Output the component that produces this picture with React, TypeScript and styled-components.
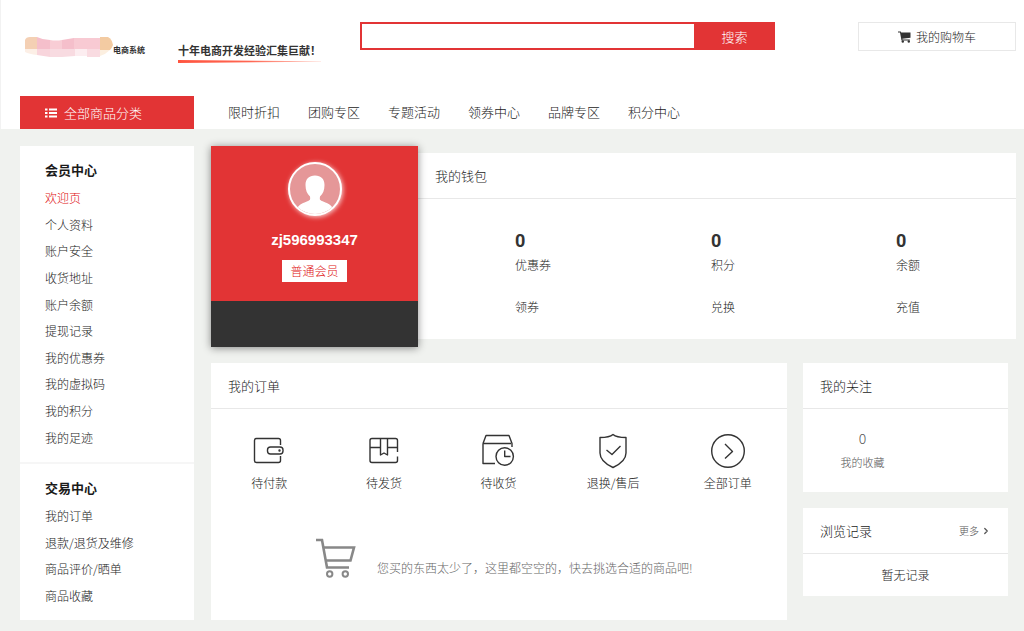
import React from 'react';
import styled, { createGlobalStyle } from 'styled-components';
import { ChevronRight } from 'lucide-react';

const red = '#e23435';
const ink = '#1a1a1a';

const GlobalStyle = createGlobalStyle`
  * { box-sizing: border-box; }
  body {
    margin: 0;
    background: #f0f2ef;
    color: ${ink};
    font-family: "Noto Sans CJK SC", "Liberation Sans", sans-serif;
    font-size: 12px;
    font-weight: 300;
    line-height: 18px;
  }
  a { color: inherit; text-decoration: none; }
  h1, h2, h3, p, ul { margin: 0; padding: 0; font-weight: inherit; }
  ul { list-style: none; }
  button, input { font-family: inherit; font-weight: inherit; }
  svg { display: block; flex: none; }
`;

const Header = styled.header`
  background: #fff;
  border-left: 1px solid #f2f2f2;
  padding: 0 8px 0 19px;
`;

const HeaderTop = styled.div`
  display: flex;
  align-items: flex-start;
  padding: 22px 0 32px;
`;

const Brand = styled.div`
  flex: 0 0 340px;
  display: flex;
  align-items: flex-start;
  padding: 14px 0 0 5px;
  color: #333;
`;

const LogoText = styled.span`
  width: 65px;
  font-size: 8px;
  font-weight: 700;
  line-height: 28px;
  white-space: nowrap;
`;

const Slogan = styled.p`
  padding-top: 4px;
  font-size: 11px;
  font-weight: 700;
  line-height: 20px;
  white-space: nowrap;

  &::after {
    content: '';
    display: block;
    height: 3px;
    background: linear-gradient(to right, #ff5540, #ff6550 50%, #ffd8d0);
    clip-path: polygon(0 0, 100% 40%, 100% 60%, 0 100%);
  }
`;

const SearchForm = styled.form`
  flex: 1;
  display: flex;
  height: 28px;
  margin-right: 83px;
`;

const SearchInput = styled.input`
  flex: 1;
  min-width: 0;
  border: 2px solid ${red};
  border-right: 0;
  border-radius: 0;
  padding: 0 8px;
  font-size: 13px;
  outline: 0;
`;

const SearchButton = styled.button`
  width: 81px;
  border: 0;
  padding: 0;
  background: ${red};
  color: #fff;
  font-size: 13px;
`;

const CartLink = styled.a`
  flex: 0 0 158px;
  height: 29px;
  display: flex;
  align-items: center;
  justify-content: center;
  gap: 5px;
  border: 1px solid #e8e8e8;
`;

const NavBar = styled.nav`
  display: flex;
  height: 33px;
  align-items: center;
  font-size: 13px;
`;

const CategoryLink = styled.a`
  flex: 0 0 174px;
  align-self: stretch;
  display: flex;
  align-items: center;
  gap: 7px;
  padding-left: 25px;
  background: ${red};
  color: #fff;
`;

const NavList = styled.ul`
  display: flex;
  gap: 28px;
  padding: 0 0 2px 34px;
`;

const Main = styled.main`
  display: flex;
  align-items: flex-start;
  gap: 17px;
  padding: 17px 8px 10px 20px;
`;

const Sidebar = styled.aside`
  flex: 0 0 174px;
  background: #fff;
`;

const MenuSection = styled.section`
  padding: 12px 25px 11px;

  & + & { border-top: 2px solid #f6f6f6; }
`;

const MenuTitle = styled.h2`
  margin-bottom: 3px;
  font-size: 13px;
  font-weight: 700;
  line-height: 24px;
`;

const MenuList = styled.ul<{ $height: number }>`
  display: grid;
  grid-auto-rows: 1fr;
  align-items: center;
  min-height: ${(p) => p.$height}px;
`;

const MenuLink = styled.a<{ $active?: boolean }>`
  color: ${(p) => (p.$active ? '#e01011' : ink)};
`;

const Content = styled.div`
  flex: 1;
  min-width: 0;
`;

const Overview = styled.div`
  display: flex;
  align-items: flex-start;
`;

const UserCard = styled.section`
  position: relative;
  flex: 0 0 207px;
  border-bottom: 46px solid #333;
  background: ${red};
  color: #fff;
  box-shadow: 0 1px 8px rgba(0, 0, 0, 0.45);
  display: flex;
  flex-direction: column;
  align-items: center;
  padding: 16px 0 19px;
`;

const Avatar = styled.div`
  width: 54px;
  height: 54px;
  border: 2px solid #fff;
  border-radius: 50%;
  overflow: hidden;
  background: #e59798;
  box-shadow: 1px 1px 5px rgba(255, 255, 255, 0.8);
`;

const UserName = styled.h1`
  margin: 14px 0 10px;
  font-family: "Liberation Sans", sans-serif;
  font-size: 15px;
  font-weight: 700;
  line-height: 20px;
`;

const Badge = styled.span`
  padding: 2px 8px;
  background: #fff;
  color: #e01011;
`;

const Card = styled.section`
  background: #fff;
`;

const WalletCard = styled(Card)`
  flex: 1;
  margin-top: 7px;
`;

const CardHead = styled.div`
  display: flex;
  align-items: center;
  justify-content: space-between;
  height: 46px;
  padding: 0 17px;
  border-bottom: 1px solid #e8e8e8;
`;

const CardTitle = styled.h2`
  font-size: 13px;
`;

const WalletGrid = styled.div`
  display: grid;
  grid-template-columns: 196fr 185fr 120fr;
  padding: 30px 0 23px 97px;
`;

const WalletItem = styled.div`
  display: flex;
  flex-direction: column;
  align-items: flex-start;
`;

const WalletValue = styled.strong`
  color: #333;
  font-family: Roboto, sans-serif;
  font-size: 18px;
  font-weight: 700;
  line-height: 24px;
`;

const WalletLabel = styled.span`
  margin: 3px 0 24px;
`;

const Columns = styled.div`
  display: flex;
  align-items: flex-start;
  gap: 16px;
  padding: 16px 8px 0 0;
`;

const OrdersCard = styled(Card)`
  flex: 1;
`;

const OrderList = styled.ul`
  display: grid;
  grid-template-columns: repeat(5, 1fr);
  padding: 24px 2px 0 1px;
`;

const OrderLink = styled.a`
  display: flex;
  flex-direction: column;
  align-items: center;
  gap: 5px;
`;

const EmptyCart = styled.div`
  display: flex;
  align-items: center;
  gap: 20px;
  padding: 46px 0 42px 105px;
  color: #666;
`;

const EmptyText = styled.p`
  padding-top: 20px;
`;

const SideColumn = styled.div`
  flex: 0 0 205px;
  display: grid;
  gap: 16px;
`;

const FollowLink = styled.a`
  display: flex;
  flex-direction: column;
  align-items: center;
  gap: 6px;
  width: 119px;
  padding: 20px 0 21px;
  color: #555;
  font-size: 11px;
`;

const FollowCount = styled.span`
  font-size: 14px;
`;

const MoreLink = styled.a`
  display: flex;
  align-items: center;
  gap: 2px;
  color: #555;
  font-size: 10px;
`;

const NoRecords = styled.p`
  padding: 12px 0;
  text-align: center;
`;

const Logo = () => (
  <svg width="88" height="22" viewBox="0 0 88 22" aria-hidden="true">
    <path d="M0 4 Q1 1 5 1 H12 V13 H0Z" fill="#f4d0b4" />
    <path d="M0 13 H12 V19 Q4 18 0 16Z" fill="#fcefe6" />
    <path d="M12 1 Q18 4 25 4 V13 H12Z" fill="#f5bfcb" />
    <path d="M25 4 Q31 5 37 4 V13 H25Z" fill="#f8cdd5" />
    <path d="M37 4 Q43 3 49 2 V13 H37Z" fill="#f5bfcb" />
    <path d="M49 2 H75 V13 H49Z" fill="#f8cad3" />
    <path d="M12 13 H25 V21 L12 19Z" fill="#f8d5dc" />
    <path d="M25 13 H50 V20 L37 21 H25Z" fill="#f8dbe1" />
    <path d="M50 13 H62 V20 H50Z" fill="#fcedf0" />
    <path d="M62 13 H75 V21 H62Z" fill="#f9dbe1" />
    <path d="M75 1 H83 Q87 3 88 9 Q87 12 85 14 H75Z" fill="#f3cba2" />
    <path d="M75 14 H85 Q81 18 75 20Z" fill="#fcefe0" />
  </svg>
);

const ListIcon = () => (
  <svg width="12" height="10" viewBox="0 0 12 10" fill="#fff" aria-hidden="true">
    <path d="M0 0.500H2.500V2.500H0ZM0 4H2.500V6H0ZM0 7.500H2.500V9.500H0ZM4 0.500H12V2.500H4ZM4 4H12V6H4ZM4 7.500H12V9.500H4Z" />
  </svg>
);

const SmallCart = () => (
  <svg width="13" height="12" viewBox="0 0 13 12" fill="#333" aria-hidden="true">
    <path d="M0 0.5H2.8L3.2 1.5H12.5V6.8L4.3 7.7L4.5 8.5H11.8V9.4H3.5L2 1.5H0Z" />
    <circle cx="4.8" cy="10.5" r="1.2" />
    <circle cx="10.8" cy="10.5" r="1.2" />
  </svg>
);

const LargeCart = () => (
  <svg width="41" height="40" viewBox="0 0 41 40" fill="none" stroke="#888" aria-hidden="true">
    <path d="M0 2H6L11 29.5H33" strokeWidth="2.6" />
    <path d="M7 9.5H38L34.5 22.5H10" strokeWidth="2.6" />
    <circle cx="13.7" cy="36" r="2.7" strokeWidth="2" />
    <circle cx="29.3" cy="36" r="2.7" strokeWidth="2" />
  </svg>
);

const Person = () => (
  <svg width="50" height="50" viewBox="0 0 50 50" fill="#fff" aria-hidden="true">
    <path d="M25 11.500C31 11.500 34.500 15 34.500 21C34.500 26 33 30 30 32.500C29.500 36 30 36 32 37C37 39 40 40 43 44V50H7V44C10 40 13 39 18 37C20 36 20.500 36 20 32.500C17 30 15.500 26 15.500 21C15.500 15 19 11.500 25 11.500Z" />
  </svg>
);

const OrderIcon = ({ children }: { children: React.ReactNode }) => (
  <svg width="36" height="36" viewBox="0 0 36 36" fill="none" stroke="#333" strokeWidth="1.4" strokeLinejoin="round" aria-hidden="true">
    {children}
  </svg>
);

const orders = [
  {
    label: '待付款',
    icon: (
      <>
        <path d="M29.500 12V7.500Q29.500 5.500 27.500 5.500H5.500Q3.500 5.500 3.500 7.500V27.500Q3.500 29.500 5.500 29.500H27.500Q29.500 29.500 29.500 27.500V23" />
        <rect x="16.5" y="14" width="15.500" height="7" rx="3" />
        <circle cx="28.5" cy="17.5" r="0.5" fill="#333" />
      </>
    ),
  },
  {
    label: '待发货',
    icon: (
      <>
        <path d="M31.500 19V7.500Q31.500 5.500 29.500 5.500H6Q4 5.500 4 7.500V27.500Q4 29.500 6 29.500H29.500Q31.500 29.500 31.500 27.500V23.500" />
        <path d="M4 14.500H14.500M21.500 14.500H31.500M14.500 5.500V22L18 20L21.500 22V5.500" />
      </>
    ),
  },
  {
    label: '待收货',
    icon: (
      <>
        <path d="M3 10.500L6 2.500H29L32 10.500V14M3 10.500H31M3 10.500V30.500H15" />
        <circle cx="24.700" cy="23.500" r="8.700" />
        <path d="M24.700 17.500V23.500H30.500" />
      </>
    ),
  },
  {
    label: '退换/售后',
    icon: (
      <>
        <path d="M18 1.500Q14.500 4.500 5 4.500V20Q5 28.500 18 34.500Q31 28.500 31 20V4.500Q21.500 4.500 18 1.500Z" />
        <path d="M11.500 17L17 21.500L25.500 13" />
      </>
    ),
  },
  {
    label: '全部订单',
    icon: (
      <>
        <circle cx="18" cy="18" r="16.300" />
        <path d="M15 11L22.500 18.500L15 25.500" />
      </>
    ),
  },
];

const navItems = ['限时折扣', '团购专区', '专题活动', '领券中心', '品牌专区', '积分中心'];

const menus = [
  {
    title: '会员中心',
    height: 266,
    items: ['欢迎页', '个人资料', '账户安全', '收货地址', '账户余额', '提现记录', '我的优惠券', '我的虚拟码', '我的积分', '我的足迹'],
  },
  {
    title: '交易中心',
    height: 106,
    items: ['我的订单', '退款/退货及维修', '商品评价/晒单', '商品收藏'],
  },
];

const wallet = [
  { label: '优惠券', action: '领券' },
  { label: '积分', action: '兑换' },
  { label: '余额', action: '充值' },
];

export default function App() {
  return (
    <>
      <GlobalStyle />
      <Header>
        <HeaderTop>
          <Brand>
            <Logo />
            <LogoText>电商系统</LogoText>
            <Slogan>十年电商开发经验汇集巨献！</Slogan>
          </Brand>
          <SearchForm role="search">
            <SearchInput type="text" aria-label="搜索" />
            <SearchButton type="button">搜索</SearchButton>
          </SearchForm>
          <CartLink href="#">
            <SmallCart />
            我的购物车
          </CartLink>
        </HeaderTop>
        <NavBar>
          <CategoryLink href="#">
            <ListIcon />
            全部商品分类
          </CategoryLink>
          <NavList>
            {navItems.map((item) => (
              <li key={item}>
                <a href="#">{item}</a>
              </li>
            ))}
          </NavList>
        </NavBar>
      </Header>
      <Main>
        <Sidebar>
          {menus.map((menu) => (
            <MenuSection key={menu.title}>
              <MenuTitle>{menu.title}</MenuTitle>
              <MenuList $height={menu.height}>
                {menu.items.map((item) => (
                  <li key={item}>
                    <MenuLink href="#" $active={item === '欢迎页'}>{item}</MenuLink>
                  </li>
                ))}
              </MenuList>
            </MenuSection>
          ))}
        </Sidebar>
        <Content>
          <Overview>
            <UserCard>
              <Avatar>
                <Person />
              </Avatar>
              <UserName>zj596993347</UserName>
              <Badge>普通会员</Badge>
            </UserCard>
            <WalletCard>
              <CardHead>
                <CardTitle>我的钱包</CardTitle>
              </CardHead>
              <WalletGrid>
                {wallet.map((item) => (
                  <WalletItem key={item.label}>
                    <WalletValue>0</WalletValue>
                    <WalletLabel>{item.label}</WalletLabel>
                    <a href="#">{item.action}</a>
                  </WalletItem>
                ))}
              </WalletGrid>
            </WalletCard>
          </Overview>
          <Columns>
            <OrdersCard>
              <CardHead>
                <CardTitle>我的订单</CardTitle>
              </CardHead>
              <OrderList>
                {orders.map((order) => (
                  <li key={order.label}>
                    <OrderLink href="#">
                      <OrderIcon>{order.icon}</OrderIcon>
                      {order.label}
                    </OrderLink>
                  </li>
                ))}
              </OrderList>
              <EmptyCart>
                <LargeCart />
                <EmptyText>您买的东西太少了，这里都空空的，快去挑选合适的商品吧!</EmptyText>
              </EmptyCart>
            </OrdersCard>
            <SideColumn>
              <Card>
                <CardHead>
                  <CardTitle>我的关注</CardTitle>
                </CardHead>
                <FollowLink href="#">
                  <FollowCount>0</FollowCount>
                  我的收藏
                </FollowLink>
              </Card>
              <Card>
                <CardHead>
                  <CardTitle>浏览记录</CardTitle>
                  <MoreLink href="#">
                    更多
                    <ChevronRight size={10} strokeWidth={3} />
                  </MoreLink>
                </CardHead>
                <NoRecords>暂无记录</NoRecords>
              </Card>
            </SideColumn>
          </Columns>
        </Content>
      </Main>
    </>
  );
}
